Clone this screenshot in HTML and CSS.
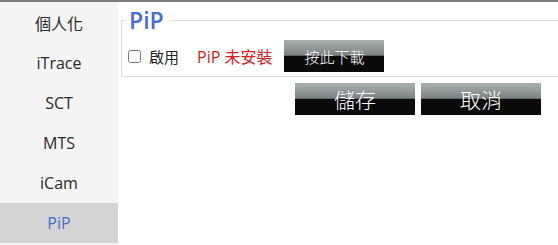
FILE: index.html
```html
<!DOCTYPE html>
<html lang="zh-Hant">
<head>
<meta charset="utf-8">
<title>PiP</title>
<link rel="stylesheet" href="styles.css">
</head>
<body>
<div class="page">
  <nav class="sidebar">
    <div class="nav-item">個人化</div>
    <div class="nav-item">iTrace</div>
    <div class="nav-item">SCT</div>
    <div class="nav-item">MTS</div>
    <div class="nav-item">iCam</div>
    <div class="nav-item active">PiP</div>
  </nav>
  <main class="content">
    <fieldset class="group">
      <legend class="group-title">PiP</legend>
      <div class="row">
        <label class="check"><input type="checkbox" class="box"><span>啟用</span></label>
        <span class="status">PiP 未安裝</span>
        <button class="btn btn-small">按此下載</button>
      </div>
    </fieldset>
    <div class="actions">
      <button class="btn btn-large">儲存</button>
      <button class="btn btn-large">取消</button>
    </div>
  </main>
</div>
</body>
</html>
```
FILE: styles.css
```css
html, body {
  margin: 0;
  padding: 0;
  background: #ffffff;
  overflow: hidden;
}
body {
  font-family: "Open Sans", "Noto Sans CJK TC", sans-serif;
  color: #222;
}
.page {
  display: flex;
  border-top: 2px solid #7a7a7a;
  height: 243px;
}
.sidebar {
  width: 118px;
  flex: none;
  background: #f4f4f4;
  padding-top: 1px;
  height: 242px;
}
.nav-item {
  height: 40px;
  display: flex;
  align-items: center;
  justify-content: center;
  font-size: 16px;
  color: #2a2a2a;
}
.nav-item.active {
  background: #d4d4d4;
  color: #4a6cd0;
}
.content {
  flex: 1;
  min-width: 0;
  overflow: hidden;
}
.group {
  margin: 6px -6px 0 3px;
  padding: 8px 0 4px 5px;
  border: 1px solid #dcdcdc;
  border-right: none;
}
.group-title {
  padding: 0 5px 0 4px;
  margin-left: -2px;
  font-size: 23px;
  font-weight: 600;
  color: #4a6cd0;
  line-height: 24px;
}
.row {
  display: flex;
  align-items: center;
  height: 32px;
}
.check {
  display: flex;
  align-items: center;
  font-size: 15px;
  color: #222;
}
.box {
  margin: 0 8px 0 1px;
  width: 13px;
  height: 13px;
}
.status {
  margin-left: 18px;
  font-size: 16px;
  color: #d42020;
}
.btn {
  border: none;
  color: #ffffff;
  font-family: "Noto Sans CJK TC", sans-serif;
  font-weight: 300;
  background: linear-gradient(to bottom, #a9b1b1 0%, #7a8282 48%, #0b0b0b 50%, #0b0b0b 100%);
  padding: 0;
  cursor: pointer;
}
.btn-small {
  width: 100px;
  height: 32px;
  margin-left: 12px;
  font-size: 15px;
}
.actions {
  display: flex;
  justify-content: flex-end;
  gap: 6px;
  padding: 6px 17px 0 0;
}
.btn-large {
  width: 120px;
  height: 32px;
  font-size: 21px;
  line-height: 32px;
}
```
